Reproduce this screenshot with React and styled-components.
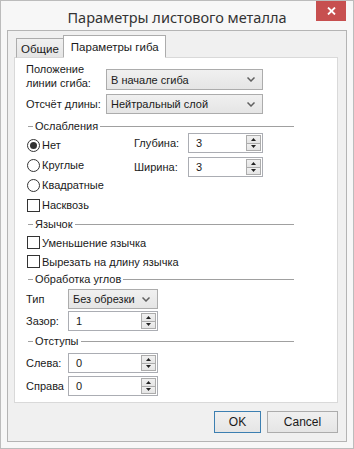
import React from 'react';
import styled, { createGlobalStyle } from 'styled-components';

const GlobalStyle = createGlobalStyle`
  html, body {
    margin: 0;
    padding: 0;
    background: #fff;
  }
`;

const Window = styled.div`
  width: 354px;
  height: 449px;
  box-sizing: border-box;
  border: 1px solid #bcbcbc;
  background: #f7f7f7;
  display: flex;
  flex-direction: column;
  padding: 0 6px 6px;
  font-family: "Liberation Sans", Arial, sans-serif;
  font-size: 11px;
  color: #1a1a1a;
  white-space: nowrap;
`;

const TitleBar = styled.div`
  height: 29px;
  display: grid;
  grid-template-columns: 1fr auto 1fr;
  align-items: start;
`;

const Title = styled.div`
  grid-column: 2;
  font-family: "Noto Sans", sans-serif;
  font-size: 14.5px;
  line-height: 32px;
  color: #333;
`;

const CloseButton = styled.div`
  grid-column: 3;
  justify-self: end;
  width: 30px;
  height: 20px;
  margin-right: 1px;
  background: #c75050;
  display: flex;
  align-items: center;
  justify-content: center;
`;

const Client = styled.div`
  flex: 1;
  display: flex;
  flex-direction: column;
  background: #f0f0f0;
  border: 1px solid #b4b4b4;
  padding: 4px 8px 8px 6px;
`;

const TabStrip = styled.div`
  display: flex;
  align-items: flex-end;
  height: 23px;
  padding-left: 2px;
  margin-bottom: -1px;
  position: relative;
  z-index: 1;
`;

const Tab = styled.div`
  box-sizing: border-box;
  height: ${p => (p.$active ? '23px' : '20px')};
  padding: ${p => (p.$active ? '4px 6px 0 7px' : '3px 4px 0 4px')};
  margin-left: ${p => (p.$active ? '-1px' : '0')};
  border: 1px solid #acacac;
  border-bottom: ${p => (p.$active ? '1px solid #fff' : '1px solid #d9d9d9')};
  background: ${p => (p.$active ? '#fff' : 'linear-gradient(#f0f0f0, #e5e5e5)')};
  font-size: 11.5px;
  line-height: 14px;
`;

const Panel = styled.div`
  flex: 1;
  background: #fff;
  border: 1px solid #d9d9d9;
  padding: 4px 0 0 11px;
  display: flex;
  flex-direction: column;
`;

const TopGrid = styled.div`
  display: grid;
  grid-template-columns: 80px 157px;
  row-gap: 4px;
  align-items: center;
`;

const Label = styled.div`
  line-height: 14px;
  align-self: ${p => p.$align || 'center'};
`;

const Combo = styled.div`
  box-sizing: border-box;
  height: ${p => p.$h || 20}px;
  align-self: end;
  border: 1px solid #acacac;
  background: linear-gradient(#f0f0f0, #e5e5e5);
  display: flex;
  align-items: center;
  justify-content: space-between;
  padding: 0 7px 0 4px;
`;

const GroupHeader = styled.div`
  display: flex;
  align-items: center;
  width: 266px;
  height: 14px;
  margin: ${p => p.$mt || 0}px 0 0 2px;
  color: #1a1a1a;

  &::before {
    content: '';
    width: 5px;
    border-top: 1px solid #a0a0a0;
  }

  &::after {
    content: '';
    flex: 1;
    border-top: 1px solid #a0a0a0;
  }

  span {
    padding: 0 2px 0 2px;
  }
`;

const Section = styled.div`
  display: flex;
  align-items: flex-start;
  margin-top: ${p => p.$mt || 0}px;
`;

const OptionList = styled.div`
  display: flex;
  flex-direction: column;
  width: ${p => p.$w || 'auto'};
  margin-top: ${p => p.$mt || 0}px;
`;

const Option = styled.label`
  display: flex;
  align-items: center;
  height: ${p => p.$h || 20}px;
  gap: 2px;
`;

const Radio = styled.span`
  box-sizing: border-box;
  width: 13px;
  height: 13px;
  margin-left: 1px;
  border-radius: 50%;
  border: 1px solid #333;
  background: #fff;
  display: flex;
  align-items: center;
  justify-content: center;

  &::after {
    content: '';
    display: ${p => (p.$checked ? 'block' : 'none')};
    width: 7px;
    height: 7px;
    border-radius: 50%;
    background: #333;
  }
`;

const Check = styled.span`
  box-sizing: border-box;
  width: 13px;
  height: 13px;
  margin-left: 1px;
  border: 1px solid #333;
  background: #fff;
`;

const FieldGrid = styled.div`
  display: grid;
  grid-template-columns: ${p => p.$label}px ${p => p.$field}px;
  grid-auto-rows: 20px;
  row-gap: ${p => p.$gap || 3}px;
  align-items: center;
  margin-top: ${p => p.$mt || 0}px;
`;

const Spin = styled.div`
  box-sizing: border-box;
  height: 20px;
  border: 1px solid #abadb3;
  background: #fff;
  display: flex;
  align-items: center;
  padding: 1px;
`;

const SpinValue = styled.span`
  flex: 1;
  padding-left: 6px;
`;

const SpinButtons = styled.div`
  display: flex;
  flex-direction: column;
  height: 100%;
  width: 15px;
`;

const SpinButton = styled.div`
  box-sizing: border-box;
  flex: 1;
  border: 1px solid #acacac;
  margin-top: ${p => (p.$down ? '-1px' : '0')};
  background: linear-gradient(#f0f0f0, #e5e5e5);
  display: flex;
  align-items: center;
  justify-content: center;
`;

const ButtonRow = styled.div`
  display: flex;
  justify-content: flex-end;
  gap: 6px;
  margin-top: 8px;
`;

const Button = styled.div`
  box-sizing: border-box;
  height: 22px;
  width: ${p => p.$w}px;
  border: 1px solid ${p => (p.$default ? '#3c7fb1' : '#acacac')};
  background: linear-gradient(#f0f0f0, #e5e5e5);
  font-size: 12px;
  display: flex;
  align-items: center;
  justify-content: center;
`;

const Chevron = () => (
  <svg width="8" height="5" viewBox="0 0 8 5">
    <path d="M0.5 0.5 L4 4 L7.5 0.5" fill="none" stroke="#606060" strokeWidth="1.5" />
  </svg>
);

const Tri = ({ down }) => (
  <svg width="5" height="3" viewBox="0 0 5 3">
    <path d={down ? 'M0 0 H5 L2.5 3 Z' : 'M0 3 H5 L2.5 0 Z'} fill="#222" />
  </svg>
);

const SpinBox = ({ value }) => (
  <Spin>
    <SpinValue>{value}</SpinValue>
    <SpinButtons>
      <SpinButton><Tri /></SpinButton>
      <SpinButton $down><Tri down /></SpinButton>
    </SpinButtons>
  </Spin>
);

const ComboBox = ({ value, h }) => (
  <Combo $h={h}>
    <span>{value}</span>
    <Chevron />
  </Combo>
);

export default function App() {
  return (
    <>
      <GlobalStyle />
      <Window>
        <TitleBar>
          <Title>Параметры листового металла</Title>
          <CloseButton>
            <svg width="9" height="8" viewBox="0 0 9 8">
              <path d="M1 0.5 L8 7.5 M8 0.5 L1 7.5" stroke="#fff" strokeWidth="1.8" />
            </svg>
          </CloseButton>
        </TitleBar>
        <Client>
          <TabStrip>
            <Tab>Общие</Tab>
            <Tab $active>Параметры гиба</Tab>
          </TabStrip>
          <Panel>
            <TopGrid>
              <Label>Положение<br />линии сгиба:</Label>
              <ComboBox value="В начале сгиба" h={21} />
              <Label>Отсчёт длины:</Label>
              <ComboBox value="Нейтральный слой" />
            </TopGrid>

            <GroupHeader $mt={5}><span>Ослабления</span></GroupHeader>
            <Section>
              <OptionList $w="108px" $mt={2}>
                <Option><Radio $checked />Нет</Option>
                <Option><Radio />Круглые</Option>
                <Option><Radio />Квадратные</Option>
                <Option><Check />Насквозь</Option>
              </OptionList>
              <FieldGrid $label={54} $field={75} $gap={4}>
                <Label>Глубина:</Label>
                <SpinBox value="3" />
                <Label>Ширина:</Label>
                <SpinBox value="3" />
              </FieldGrid>
            </Section>

            <GroupHeader $mt={2}><span>Язычок</span></GroupHeader>
            <OptionList $mt={2}>
              <Option $h={19}><Check />Уменьшение язычка</Option>
              <Option $h={19}><Check />Вырезать на длину язычка</Option>
            </OptionList>

            <GroupHeader $mt={1}><span>Обработка углов</span></GroupHeader>
            <FieldGrid $label={42} $field={90} $gap={2} $mt={3}>
              <Label>Тип</Label>
              <ComboBox value="Без обрезки" />
              <Label>Зазор:</Label>
              <SpinBox value="1" />
            </FieldGrid>

            <GroupHeader $mt={3}><span>Отступы</span></GroupHeader>
            <FieldGrid $label={42} $field={90} $gap={3} $mt={5}>
              <Label>Слева:</Label>
              <SpinBox value="0" />
              <Label>Справа</Label>
              <SpinBox value="0" />
            </FieldGrid>
          </Panel>
          <ButtonRow>
            <Button $default $w={47}>OK</Button>
            <Button $w={71}>Cancel</Button>
          </ButtonRow>
        </Client>
      </Window>
    </>
  );
}
